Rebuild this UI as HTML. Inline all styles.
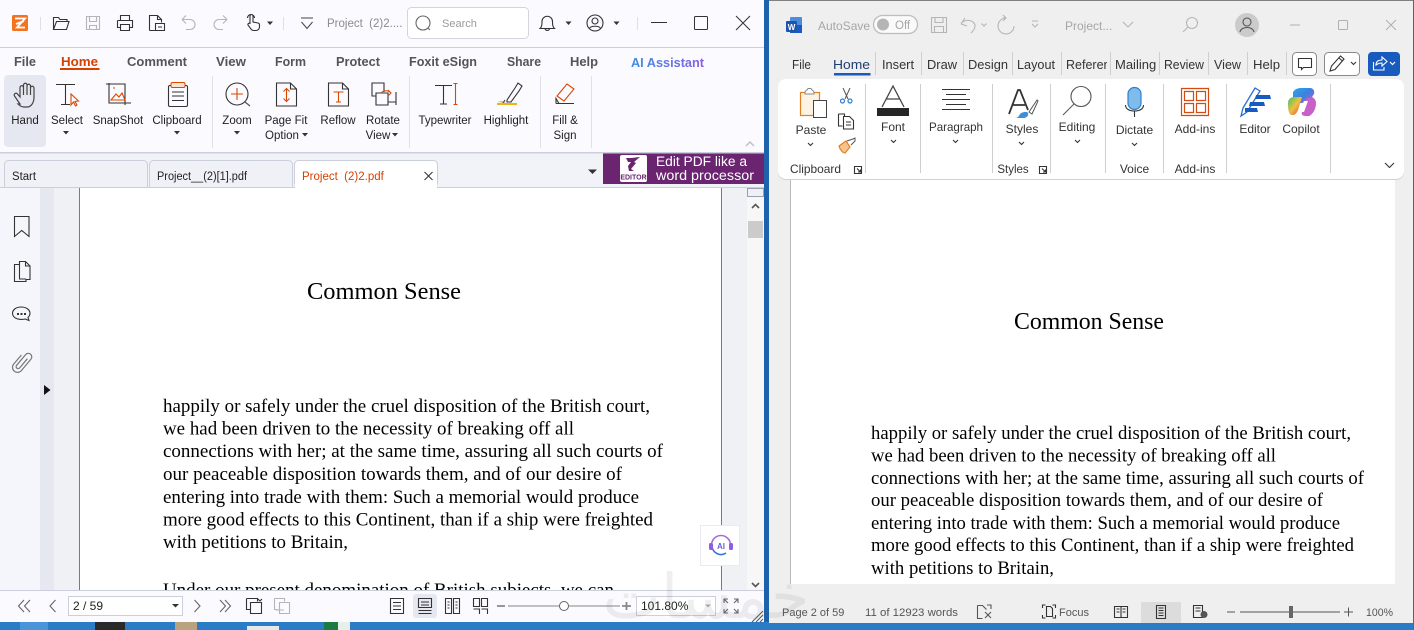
<!DOCTYPE html>
<html><head><meta charset="utf-8"><style>
html,body{margin:0;padding:0;background:#2a7cc7;width:1414px;height:630px;overflow:hidden}
svg{display:block;font-family:"Liberation Sans",sans-serif}
.m{font-size:13px;font-weight:bold;fill:#555}
.r{font-size:11.5px;fill:#222;text-anchor:middle}
.w{font-size:12.5px;fill:#333}
.wc{font-size:12px;fill:#333;text-anchor:middle}
.s{fill:none;stroke:#333;stroke-width:1.1}
.o{fill:none;stroke:#d84a00;stroke-width:1.1}
.g{fill:none;stroke:#b5b5b5;stroke-width:1.1}
.st{font-size:11px;fill:#555}
</style></head><body>
<svg width="1414" height="630" viewBox="0 0 1414 630" xmlns="http://www.w3.org/2000/svg">
<defs>
<linearGradient id="ai" x1="0" x2="1"><stop offset="0" stop-color="#3f8fe0"/><stop offset="1" stop-color="#8a5fe0"/></linearGradient>
<linearGradient id="cp" x1="0" y1="0" x2="1" y2="1"><stop offset="0" stop-color="#2aa6e8"/><stop offset=".5" stop-color="#3f7fe0"/><stop offset="1" stop-color="#c060d0"/></linearGradient>
<linearGradient id="cp2" x1="0" y1="0" x2="1" y2="1"><stop offset="0" stop-color="#40c070"/><stop offset=".5" stop-color="#f0c040"/><stop offset="1" stop-color="#e04040"/></linearGradient>
<clipPath id="pg"><rect x="80" y="188" width="641" height="402"/></clipPath>
<clipPath id="rf"><rect x="1066" y="50" width="41" height="26"/></clipPath>
<clipPath id="ml"><rect x="1115" y="50" width="41" height="26"/></clipPath>
</defs>

<!-- desktop -->
<rect width="1414" height="630" fill="#2a7cc7"/>
<rect x="764" y="0" width="5" height="622" fill="#1d62ab"/>
<rect x="20" y="622" width="28" height="8" fill="#4a95da"/>
<rect x="95" y="622" width="30" height="8" fill="#2a2a2a"/>
<rect x="175" y="622" width="22" height="8" fill="#b9a27f"/>
<rect x="247" y="626" width="32" height="4" fill="#e8e8e8"/>
<rect x="324" y="622" width="14" height="8" fill="#1d7a45"/>
<rect x="338" y="622" width="12" height="8" fill="#e6efe8"/>

<!-- ========== FOXIT ========== -->
<rect x="0" y="0" width="764" height="622" fill="#fafaff"/>
<rect x="0" y="47" width="764" height="1" fill="#cbcedb"/>
<rect x="0" y="152" width="764" height="1.5" fill="#cbcedb"/>

<!-- QAT -->
<rect x="12" y="15" width="16" height="16" rx="1.5" fill="#f4731f"/>
<path d="M15 18.5h10l-8 9h8M16 24l8-3" fill="none" stroke="#fff" stroke-width="1.8"/>
<path d="M40.5 17v13M283.5 17v13M637.5 17v13" stroke="#dfe0e6"/>
<path class="s" d="M53.5 29.5V17.5h5l1.5 2h7v2.5M53.5 29.5h13l2.5-8H56.500l-3 8z"/>
<path class="g" d="M86.500 16.500h13v13h-13zM89.500 16.500v5h7v-5M89.500 29.500v-4h7v4"/>
<path class="s" d="M120.500 20.500v-5h9v5M117.500 20.500h15v7h-3M120.500 27.500h-3v-7M120.500 24.500h9v6h-9z"/>
<path class="s" d="M149.500 30.500v-15h8l4 4v3M149.500 30.500h6M157.500 15.500v4h4M155.500 23.500h9v7h-9zM158 27h4"/>
<path class="g" d="M182 19.500l4-4M182 19.500l4 4M182 19.500h8a5 5 0 0 1 0 10h-4"/>
<path class="g" d="M227 19.500l-4-4M227 19.500l-4 4M227 19.500h-8a5 5 0 0 0 0 10h4"/>
<path class="s" d="M250 24v-8a1.500 1.500 0 0 1 3 0v6l5 1a2 2 0 0 1 1.500 2v2a3.500 3.500 0 0 1-3.500 3.500h-2.500a3 3 0 0 1-2.500-1.500l-3-4a1.300 1.300 0 0 1 2-1.500zM247.500 18a3.500 3.500 0 0 1 7 0"/>
<path d="M267 21.500h6l-3 3.500z" fill="#333"/>
<path d="M301 18h12M301.500 22l5.500 6.500 5.500-6.500" fill="none" stroke="#444"/>
<text x="327" y="27" font-size="11.500" fill="#8c8c8c" xml:space="preserve">Project  (2)2....</text>
<rect x="407.500" y="7.500" width="121" height="31" rx="4" fill="#fff" stroke="#d3d5de"/>
<circle cx="423" cy="23" r="7" fill="none" stroke="#666" stroke-width="1.100"/><path d="M428 28l2 2" stroke="#666"/>
<text x="442" y="27" font-size="11" fill="#9a9a9a">Search</text>
<path class="s" d="M540 28.500h14.500c-2-2-2-4-2-7a5 5 0 0 0-10.500 0c0 3 0 5-2 7zM545 29a2.500 2.500 0 0 0 4.500 0"/>
<path d="M565.500 21.500h6l-3 3.500z" fill="#333"/>
<circle class="s" cx="595" cy="23" r="8"/><circle class="s" cx="595" cy="21" r="3"/><path class="s" d="M589.500 28.500c1-3 10-3 11 0"/>
<path d="M613.500 21.500h6l-3 3.500z" fill="#333"/>
<path d="M651 22.500h16" stroke="#333" stroke-width="1"/>
<rect x="694.500" y="16.500" width="13" height="13" rx="1" fill="none" stroke="#333"/>
<path d="M736 16l14 14M750 16l-14 14" stroke="#333"/>

<!-- Menu -->
<text class="m" x="14" y="66" textLength="22" lengthAdjust="spacingAndGlyphs">File</text>
<text class="m" x="61" y="66" style="fill:#d84000" textLength="37" lengthAdjust="spacingAndGlyphs">Home</text>
<rect x="60" y="68" width="39.500" height="2" fill="#d84000"/>
<text class="m" x="127" y="66" textLength="60" lengthAdjust="spacingAndGlyphs">Comment</text>
<text class="m" x="216" y="66" textLength="30" lengthAdjust="spacingAndGlyphs">View</text>
<text class="m" x="275" y="66" textLength="31" lengthAdjust="spacingAndGlyphs">Form</text>
<text class="m" x="336" y="66" textLength="44" lengthAdjust="spacingAndGlyphs">Protect</text>
<text class="m" x="409" y="66" textLength="68" lengthAdjust="spacingAndGlyphs">Foxit eSign</text>
<text class="m" x="507" y="66" textLength="34" lengthAdjust="spacingAndGlyphs">Share</text>
<text class="m" x="570" y="66" textLength="28" lengthAdjust="spacingAndGlyphs">Help</text>
<text class="m" x="631" y="67" style="fill:url(#ai)" textLength="73" lengthAdjust="spacingAndGlyphs">AI Assistant</text>

<!-- Ribbon -->
<rect x="4" y="75" width="42" height="72" rx="4" fill="#e6e8f1"/>
<path d="M212.500 76v72M409.500 76v72M540.500 76v72M591.500 76v72" stroke="#dfe1ea"/>
<path fill="none" stroke="#444" stroke-width="1.200" d="M20 104l-5.500-8a1.800 1.800 0 0 1 3-2l2.500 3V87.500a1.700 1.700 0 0 1 3.500 0V85a1.700 1.700 0 0 1 3.500 0v1a1.700 1.700 0 0 1 3.500 0v2a1.700 1.700 0 0 1 3.500 0V97c0 6-3 10-7 10h-3c-2 0-4-1-6-3zM23.500 87.500V95M27 85v10M30.500 86v9"/>
<path class="s" d="M56 84.500h19M65.500 84.500v20M61 104.500h9"/>
<path d="M71 94v11l2.500-3 2 4 1.500-1-2-3.500 3.500-.5z" class="o"/>
<path class="s" d="M106 84h19v19M109 84v-1M109 84v19h22M125 103v2"/>
<path class="o" d="M111 100l5-6 3 3 3-4 3 7zM113 88h2"/>
<rect class="s" x="168.500" y="85.500" width="19" height="21" rx="1.500"/>
<rect x="171" y="82.500" width="14" height="5" rx="1.500" fill="#fbe3d6" stroke="#d84a00"/>
<path class="s" d="M172 92h12M172 96h12M172 100.500h12"/>
<circle class="s" cx="237" cy="94" r="11"/>
<path d="M245 102l5 4" stroke="#555" stroke-width="1.200"/>
<path class="o" d="M231 94h12M237 88v12"/>
<path class="s" d="M276.500 83h14l6 6v17h-20zM290.500 83v6h6"/>
<path class="o" d="M286.500 88.500v13M283.500 91.500l3-3 3 3M283.500 98.500l3 3 3-3"/>
<path class="s" d="M328.500 83h14l6 6v17h-20zM342.500 83v6h6"/>
<path class="o" d="M333.500 92h10M338.500 92v10M336 102h5"/>
<path class="s" d="M384 92v-9h-12v13h4M380 83h4M376 93h12v12h-12zM396 105v-3h-8M396 92v10"/>
<path class="o" d="M381 93c3-3 7-3 10 0M388 90l3 3-3 3"/>
<path class="s" d="M435 85.500h17M443.500 85.500v18.500M440 104h7"/>
<path class="o" d="M455.500 83.500v21M453.500 83.500h4M453.500 104.500h4"/>
<path class="s" d="M507 100l8-12 3-5 4 3-3 5-8 11h-4zM505 100l-2 3 3 .5"/>
<path d="M497 102l5-1 2 1.500z" fill="#e7a61d"/>
<rect x="497" y="103" width="20" height="2" fill="#efb40e"/>
<path class="o" d="M557 96l10-12 7 5-10 12z" fill="#fbe3d6"/>
<path class="s" d="M556 103.500h18M556 103.500v-5l3 5"/>

<g class="lab">
<text class="r" x="25" y="124">Hand</text>
<text class="r" x="67" y="124">Select</text>
<text class="r" x="118" y="124">SnapShot</text>
<text class="r" x="177" y="124">Clipboard</text>
<text class="r" x="237" y="124">Zoom</text>
<text class="r" x="286" y="124">Page Fit</text>
<text class="r" x="282" y="139">Option</text>
<text class="r" x="338" y="124">Reflow</text>
<text class="r" x="383" y="124">Rotate</text>
<text class="r" x="378" y="139">View</text>
<text class="r" x="445" y="124">Typewriter</text>
<text class="r" x="506" y="124">Highlight</text>
<text class="r" x="565" y="124">Fill &amp;</text>
<text class="r" x="565" y="139">Sign</text>
</g>
<path fill="#333" d="M63 131h6l-3 3.500zM174 131h6l-3 3.500zM234 131h6l-3 3.500zM302 133h6l-3 3.500zM392 133h6l-3 3.500z"/>
<path d="M746 146l4-4 4 4" fill="none" stroke="#c0c0c0" stroke-width="1.500"/>

<!-- Tabs -->
<rect x="0" y="153.500" width="764" height="34" fill="#f2f3f8"/>
<rect x="4.500" y="160.500" width="143" height="30" rx="4" fill="#f0f1f6" stroke="#cbcedb"/>
<rect x="149.500" y="160.500" width="143" height="30" rx="4" fill="#f0f1f6" stroke="#cbcedb"/>
<rect x="294.500" y="160.500" width="143" height="30" rx="4" fill="#fff" stroke="#cbcedb"/>
<text x="12" y="180" font-size="11.500" fill="#222" textLength="24" lengthAdjust="spacingAndGlyphs">Start</text>
<text x="157" y="180" font-size="11.500" fill="#222" textLength="90" lengthAdjust="spacingAndGlyphs">Project__(2)[1].pdf</text>
<text x="302" y="180" font-size="11.500" fill="#d84000" xml:space="preserve">Project  (2)2.pdf</text>
<path d="M424.500 172l8 8M432.500 172l-8 8" stroke="#333"/>
<path d="M588 169.500h9l-4.500 4.500z" fill="#333"/>
<rect x="603" y="153.500" width="161" height="30.500" fill="#6b2470"/>
<rect x="620" y="155" width="27" height="27" rx="2" fill="#fff"/>
<path d="M626 158h5l9-1-6 5 2 1-5 6 3 2h-5l-1-5 3-4-3 0z" fill="#6b2470"/>
<text x="633.500" y="179.500" font-size="7" font-weight="bold" fill="#6b2470" text-anchor="middle">EDITOR</text>
<text x="656" y="166" font-size="13.500" fill="#fff" textLength="91" lengthAdjust="spacingAndGlyphs">Edit PDF like a</text>
<text x="656" y="180" font-size="13.500" fill="#fff" textLength="98" lengthAdjust="spacingAndGlyphs">word processor</text>

<!-- Main -->
<rect x="0" y="187.500" width="764" height="403" fill="#f0f1f5"/>
<rect x="0" y="187.500" width="40" height="403" fill="#f5f6fb"/>
<rect x="40" y="187.500" width="14" height="403" fill="#e6e8f1"/>
<rect x="80" y="187.500" width="641" height="403" fill="#fff"/>
<rect x="294.500" y="184" width="143" height="4" fill="#fff"/>
<path d="M79.500 188v402M721.500 188v402" stroke="#7a7a7a"/>
<rect x="0" y="187" width="295" height="1" fill="#cbcedb"/><rect x="437" y="187" width="327" height="1" fill="#cbcedb"/>
<rect x="747" y="188" width="17" height="403" fill="#f7f7f7"/>
<rect x="747.500" y="188.500" width="16" height="8" fill="#eef0f6" stroke="#9aa0ac"/>
<path d="M752 208l3.500-3.500 3.500 3.500" fill="none" stroke="#555" stroke-width="1.600"/>
<rect x="748" y="221" width="15" height="17" fill="#cbcbcb"/>
<path d="M752 583l3.500 3.500 3.500-3.500" fill="none" stroke="#555" stroke-width="1.600"/>

<path class="s" d="M14.500 216.500h14.500v20l-7.250-6-7.250 6z"/>
<path class="s" d="M14.500 264.500h5v-3h6l4.500 4.500v13.500h-4v2h-11.500zM19.500 264.500v14.500h6.500M25.500 261.500v4.500h4.500"/>
<path class="s" d="M21 307c5 0 9 2.500 9 6.500 0 2-1 3-2 4l1 3-4-1.500c-4 1-12 .5-12.500-5.500 0-4 4-6.500 8.500-6.500z"/>
<path fill="#333" d="M17 313h2v2h-2zM20.500 313h2v2h-2zM24 313h2v2h-2z"/>
<path transform="rotate(40 22 362)" d="M24 356V368a2 2 0 0 1-4 0V354a3.500 3.500 0 0 1 7 0V369a5 5 0 0 1-10 0V357" fill="none" stroke="#777" stroke-width="1.200"/>
<path d="M44 385l6.500 5-6.500 5z" fill="#111"/>

<!-- PDF page -->
<text x="307" y="299" font-family="Liberation Serif" font-size="24" fill="#000" textLength="154" lengthAdjust="spacingAndGlyphs">Common Sense</text>
<g clip-path="url(#pg)" style="font-family:'Liberation Serif',serif;font-size:18.670px">
<text x="163" y="412" textLength="487" lengthAdjust="spacingAndGlyphs">happily or safely under the cruel disposition of the British court,</text>
<text x="163" y="434.500" textLength="411" lengthAdjust="spacingAndGlyphs">we had been driven to the necessity of breaking off all</text>
<text x="163" y="457" textLength="500" lengthAdjust="spacingAndGlyphs">connections with her; at the same time, assuring all such courts of</text>
<text x="163" y="480" textLength="459" lengthAdjust="spacingAndGlyphs">our peaceable disposition towards them, and of our desire of</text>
<text x="163" y="503" textLength="476" lengthAdjust="spacingAndGlyphs">entering into trade with them: Such a memorial would produce</text>
<text x="163" y="525.500" textLength="490" lengthAdjust="spacingAndGlyphs">more good effects to this Continent, than if a ship were freighted</text>
<text x="163" y="548" textLength="185" lengthAdjust="spacingAndGlyphs">with petitions to Britain,</text>
<text x="163" y="596" textLength="451" lengthAdjust="spacingAndGlyphs">Under our present denomination of British subjects, we can</text>
</g>

<!-- AI btn -->
<rect x="700.500" y="525.500" width="39" height="40" fill="#fff" stroke="#e8e9f2"/>
<path d="M711.500 545a9.500 9.500 0 0 1 19 0" fill="none" stroke="#a06ae0" stroke-width="1.500"/>
<path d="M712 546a9 9 0 0 0 14 7" fill="none" stroke="#2f6fd0" stroke-width="1.500"/>
<rect x="709" y="543" width="4" height="7" rx="1.500" fill="#8f5fe0"/><rect x="729" y="543" width="4" height="7" rx="1.500" fill="#8f5fe0"/>
<text x="721" y="549" font-size="8" fill="#6a5fe0" text-anchor="middle" font-weight="bold">AI</text>

<!-- Bottom bar -->
<rect x="0" y="590" width="764" height="32" fill="#fafaff"/>
<rect x="0" y="590" width="764" height="1" fill="#cbcedb"/>
<path fill="none" stroke="#666" stroke-width="1.100" d="M24 600l-5.500 6 5.500 6M30 600l-5.500 6 5.500 6M55.500 600l-5.500 6 5.500 6M194.500 600l5.500 6-5.500 6M220 600l5.500 6-5.500 6M225 600l5.500 6-5.500 6"/>
<rect x="68.500" y="596.500" width="114" height="19" fill="#fff" stroke="#cbcedb"/>
<text x="73" y="610" font-size="12" fill="#222">2 / 59</text>
<path d="M172 604h7l-3.500 3.500z" fill="#333"/>
<path class="s" d="M246.500 598.500h11v3M246.500 598.500v11h4M250.500 602.500h11v11h-11zM258 599l2 2 2-2"/>
<path class="g" d="M274.500 598.500h10v3M274.500 598.500v11h3M279.500 602.500h10v11h-10zM276 610h8"/>
<path class="s" d="M390.500 598.500h13v15h-13zM393 602.500h8M393 606h8M393 609.500h8"/>
<rect x="413" y="594" width="24" height="24" rx="3" fill="#e6e8f1"/>
<path class="s" d="M418.500 598.500h13v9h-13zM418.500 610.500h13M418.500 613.500h13M421 602h8M421 605h8"/>
<path class="s" d="M445.500 598.500h6v15h-6zM453.500 598.500h6v15h-6zM447.500 602h2M447.500 605h2M447.500 608h2M455.500 602h2M455.500 605h2M455.500 608h2"/>
<path class="s" d="M473.500 598.500h6v8h-6zM481.500 598.500h6v8h-6zM473.500 609h6v5M481.500 609h6v5"/>
<path d="M497 606h8M622 606h9M626.500 602v8" stroke="#888" stroke-width="1.800"/>
<path d="M508 606h112" stroke="#b8b8b8" stroke-width="1.800"/>
<circle cx="564" cy="606" r="4.500" fill="#fff" stroke="#666"/>
<rect x="636.500" y="596.500" width="79" height="19" fill="#fff" stroke="#cbcedb"/>
<text x="641" y="610" font-size="12" fill="#222">101.80%</text>
<path d="M705 604.500h6l-3 3z" fill="#b0b0b0"/>
<path fill="none" stroke="#666" stroke-width="1.100" d="M724 603v-4h4M738 603v-4h-4M724 609v4h4M738 609v4h-4M724 599l4 4M738 599l-4 4M724 613l4-4M738 613l-4-4"/>
<path d="M752 622l11-11M756 622l7-7M760 622l3-3" stroke="#555"/>

<!-- ========== WORD ========== -->
<rect x="769" y="0" width="644" height="623" fill="#efefef"/>
<rect x="769" y="0" width="644" height="1" fill="#808080"/>
<rect x="1413" y="0" width="1" height="630" fill="#2a6fb5"/>

<!-- Title -->
<rect x="790" y="17" width="12" height="16" rx="1" fill="#4a8de0"/>
<rect x="790" y="25" width="12" height="8" fill="#185abd"/>
<rect x="786" y="21" width="11" height="11" rx="1" fill="#1d54b0"/>
<text x="791.500" y="30" font-size="8" font-weight="bold" fill="#fff" text-anchor="middle">W</text>
<text x="818" y="30" font-size="12" fill="#a6a6a6">AutoSave</text>
<rect x="873.500" y="15.500" width="44" height="18" rx="9" fill="#fafafa" stroke="#bdbdbd" stroke-width="1.300"/>
<circle cx="883" cy="24.500" r="6" fill="#b5b5b5"/>
<text x="895" y="29" font-size="11.500" fill="#a6a6a6">Off</text>
<path class="g" d="M931.500 17.500h15v15h-15zM935 17.500v5h8v-5M934.500 32.500v-6h9v6"/>
<path class="g" d="M961 24l4-6M961 24l6 2M961 24c4-6 14-4 14 2 0 3-2 5-4 7M981.500 23.500l2.500 2.500 2.500-2.500"/>
<path class="g" d="M1006 18a8 8 0 1 0 8 8M1006 18h-3M1003 15l3 3-3 3"/>
<path class="g" d="M1032 21h6M1032 24l3 3 3-3"/>
<text x="1065" y="30" font-size="12" fill="#a6a6a6">Project...</text>
<path class="g" d="M1123 22l5 5 5-5"/>
<circle class="g" cx="1192" cy="23" r="5.500"/><path class="g" d="M1188 27l-5 5"/>
<circle cx="1247" cy="25" r="12" fill="#cbcbcb"/>
<circle fill="none" stroke="#555" stroke-width="1.100" cx="1247" cy="22" r="4"/><path style="fill:none;stroke:#555;stroke-width:1.100" d="M1240 32c1-6 13-6 14 0"/>
<path d="M1290 25h10M1386 20l10 10M1396 20l-10 10" stroke="#b0b0b0"/>
<rect x="1338.500" y="20.500" width="9" height="9" rx="1" fill="none" stroke="#b0b0b0"/>

<!-- Tabs -->
<path d="M875.500 52v23M921.500 52v23M963.500 52v23M1012.500 52v23M1061.500 52v23M1110.500 52v23M1159.500 52v23M1208.500 52v23M1247.500 52v23M1286.500 52v23" stroke="#cfcfcf"/>
<text class="w" x="792" y="69" textLength="19" lengthAdjust="spacingAndGlyphs">File</text>
<text class="w" x="833" y="69" style="fill:#1f3d6e" textLength="37" lengthAdjust="spacingAndGlyphs">Home</text>
<rect x="834" y="73" width="36.500" height="2.500" fill="#185abd"/>
<text class="w" x="882" y="69" textLength="32" lengthAdjust="spacingAndGlyphs">Insert</text>
<text class="w" x="927" y="69" textLength="30" lengthAdjust="spacingAndGlyphs">Draw</text>
<text class="w" x="968" y="69" textLength="40" lengthAdjust="spacingAndGlyphs">Design</text>
<text class="w" x="1017" y="69" textLength="38" lengthAdjust="spacingAndGlyphs">Layout</text>
<g clip-path="url(#rf)"><text class="w" x="1066" y="69">References</text></g>
<g clip-path="url(#ml)"><text class="w" x="1115" y="69" style="font-size:13px">Mailings</text></g>
<text class="w" x="1164" y="69" textLength="40" lengthAdjust="spacingAndGlyphs">Review</text>
<text class="w" x="1214" y="69" textLength="27" lengthAdjust="spacingAndGlyphs">View</text>
<text class="w" x="1253" y="69" textLength="27" lengthAdjust="spacingAndGlyphs">Help</text>
<rect x="1292.500" y="52.500" width="24" height="23" rx="4" fill="#fff" stroke="#8a8a8a"/>
<path class="s" d="M1298.500 58.500h13v9h-8l-2 2v-2h-3z"/>
<rect x="1324.500" y="52.500" width="35" height="23" rx="4" fill="#fff" stroke="#8a8a8a"/>
<path class="s" d="M1330 71l1.500-5 9-10 3.500 3-9 10.500zM1339 58l3.500 3"/>
<path class="s" d="M1351 62l2.500 2.500 2.500-2.500"/>
<rect x="1368" y="52" width="32" height="24" rx="4" fill="#185abd"/>
<path d="M1373.500 62v8h10.500v-3M1376 65c0-4 3-5 6-5v-3l5 4.500-5 4.500v-3c-2 0-4 .5-6 2z" fill="none" stroke="#fff" stroke-width="1.100"/>
<path d="M1390 62l2.500 2.500 2.500-2.500" fill="none" stroke="#fff" stroke-width="1.200"/>

<!-- Doc bg -->
<rect x="791" y="180" width="604" height="404" fill="#fff"/>
<path d="M790.500 180v404" stroke="#b8b8b8"/>

<!-- Ribbon -->
<rect x="778" y="80" width="626" height="100" rx="8" fill="#000" opacity=".13"/>
<rect x="778" y="79" width="626" height="100" rx="8" fill="#fff"/>
<path d="M865.500 84v89M920.500 84v89M992.500 84v89M1050.500 84v89M1105.500 84v89M1163.500 84v89M1226.500 84v89M1330.500 84v89" stroke="#cfcfcf"/>
<!-- paste -->
<rect x="800.500" y="92.500" width="19" height="23" fill="#fdf3e3" stroke="#e57f22" stroke-width="1.200"/>
<path d="M805 92c1-2 2-1.500 3-3.500h3c1 2 2 1.500 3 3.500v2h-9z" fill="#fff" stroke="#888"/>
<rect x="813.500" y="100.500" width="13" height="17" fill="#fff" stroke="#444"/>
<path d="M843 88l5 11M850 88l-5 11" stroke="#555" fill="none"/>
<circle cx="842.500" cy="101" r="2" fill="none" stroke="#2f7fd0" stroke-width="1.200"/><circle cx="850" cy="101" r="2" fill="none" stroke="#2f7fd0" stroke-width="1.200"/>
<path class="s" d="M838.500 114h6v2M838.500 114v12h4M843.500 116.500h6l4 4v8.500h-10zM846 122h5M846 125h5"/>
<path d="M839 146l7-5 4 6-5 6c-2 0-5-3-6-7z" fill="#f7c48c" stroke="#e57f22" stroke-width="1.200"/>
<path d="M847 141l6-2 2-1v3l-4 4" fill="none" stroke="#555"/>
<text class="wc" x="811" y="134">Paste</text>
<text x="790" y="173" class="wc" style="text-anchor:start" textLength="51" lengthAdjust="spacingAndGlyphs">Clipboard</text>
<path class="s" d="M854.500 166.500h7v7h-7zM857 168.500l3.500 3.500M860.500 169.500v2.500h-2.500"/>
<path class="s" d="M808 143l2.500 2.500 2.500-2.500M891 140l2.500 2.500 2.500-2.500M953 140l2.500 2.500 2.500-2.500M1019 142l2.500 2.500 2.500-2.500M1075 140l2.500 2.500 2.500-2.500M1132 143l2.500 2.500 2.500-2.500"/>
<!-- font -->
<path fill="none" stroke="#444" stroke-width="1.300" d="M882 107l11-21 11 21M886 99h14"/>
<rect x="877" y="108" width="32" height="8" fill="#262626"/>
<text class="wc" x="893" y="131">Font</text>
<!-- para -->
<path class="s" d="M942 89.500h28M946 94.500h20M942 99.500h28M946 104.500h20M942 109.500h28"/>
<text class="wc" x="956" y="131" textLength="54" lengthAdjust="spacingAndGlyphs">Paragraph</text>
<!-- styles -->
<path d="M1009 114l9-24h2l8 20M1013 105h12" fill="none" stroke="#333" stroke-width="1.800"/>
<path d="M1029 112l8-12 1 1-6 13z" fill="#fff" stroke="#555"/>
<path d="M1015 118c3 0 4-2 5-4 2-2 7-3 8-1 1 3-2 5-4 5z" fill="#3f8ed8"/>
<text class="wc" x="1022" y="133">Styles</text>
<text class="wc" x="1013" y="173" style="font-size:11.500px">Styles</text>
<path class="s" d="M1039.500 166.500h7v7h-7zM1042 168.500l3.500 3.500M1045.500 169.500v2.500h-2.500"/>
<!-- editing -->
<circle fill="none" stroke="#555" stroke-width="1.100" cx="1081" cy="96.500" r="10"/><path d="M1074 104l-11 11" stroke="#555"/>
<text class="wc" x="1077" y="131">Editing</text>
<!-- dictate -->
<rect x="1128" y="87.500" width="13" height="22" rx="6.500" fill="#7fbcec" stroke="#2f7fd0" stroke-width="1.200"/>
<path class="s" d="M1125.500 105c0 4 4 6 9 6s9-2 9-6M1134.500 111v6"/>
<text class="wc" x="1134.500" y="134">Dictate</text>
<text class="wc" x="1134.500" y="173">Voice</text>
<!-- addins -->
<path fill="none" stroke="#d24b12" stroke-width="1.200" d="M1181.500 88.500h27v27h-27zM1184.500 91.500h9v9h-9zM1196.500 91.500h9v9h-9zM1184.500 103.500h9v9h-9zM1196.500 103.500h9v9h-9z"/>
<text class="wc" x="1195" y="133">Add-ins</text>
<text class="wc" x="1195" y="173">Add-ins</text>
<!-- editor -->
<path d="M1241 116l2-8 12-20 5 3-13 21z" fill="#fff" stroke="#2a6fd0" stroke-width="1.300"/>
<path d="M1256 95h14l1 4h-16zM1250 102h14l1 4h-16zM1245 108h12l1 4h-13z" fill="#185abd"/>
<text class="wc" x="1255" y="133">Editor</text>
<!-- copilot -->
<path d="M1293 92c2-3 5-4 8-4h9c3 0 5 3 4 6l-4 6-8 3-9 1z" fill="url(#cp)"/>
<path d="M1288 103c0-4 3-6 6-6h8l-3 10c-1 4-3 8-6 8h-1c-3 0-4-4-4-12z" fill="url(#cp2)"/>
<path d="M1316 103c0-3-2-5-4-6l-6 2-4 13c-1 3 1 4 4 4h3c3-1 7-6 7-13z" fill="#c860c8"/>
<path d="M1304 101h4l-4 11h-4z" fill="#fff"/>
<text class="wc" x="1301" y="133">Copilot</text>
<path class="s" d="M1385 163l4.500 4.500 4.500-4.500"/>

<!-- Word doc -->
<text x="1014" y="329" font-family="Liberation Serif" font-size="24" fill="#000" textLength="150" lengthAdjust="spacingAndGlyphs">Common Sense</text>
<g style="font-family:'Liberation Serif',serif;font-size:18.670px">
<text x="871" y="439" textLength="480" lengthAdjust="spacingAndGlyphs">happily or safely under the cruel disposition of the British court,</text>
<text x="871" y="461.500" textLength="405" lengthAdjust="spacingAndGlyphs">we had been driven to the necessity of breaking off all</text>
<text x="871" y="484" textLength="493" lengthAdjust="spacingAndGlyphs">connections with her; at the same time, assuring all such courts of</text>
<text x="871" y="506" textLength="452" lengthAdjust="spacingAndGlyphs">our peaceable disposition towards them, and of our desire of</text>
<text x="871" y="529" textLength="469" lengthAdjust="spacingAndGlyphs">entering into trade with them: Such a memorial would produce</text>
<text x="871" y="551" textLength="483" lengthAdjust="spacingAndGlyphs">more good effects to this Continent, than if a ship were freighted</text>
<text x="871" y="574" textLength="183" lengthAdjust="spacingAndGlyphs">with petitions to Britain,</text>
</g>

<!-- Word status -->
<text class="st" x="782" y="616">Page 2 of 59</text>
<text class="st" x="865" y="616" textLength="93" lengthAdjust="spacingAndGlyphs">11 of 12923 words</text>
<path fill="none" stroke="#555" stroke-width="1.100" d="M977.500 605.500h5l4 4M991 609v-4h-4M977.500 605.500v13h5M985 612l6 6M991 612l-6 6"/>
<path class="s" d="M1042.500 608v-3h3M1055.500 608v-3h-3M1042.500 615v3h3M1055.500 615v3h-3M1046.500 606.500h4l2 2v8h-6z"/>
<text class="st" x="1059" y="616" textLength="30" lengthAdjust="spacingAndGlyphs">Focus</text>
<path class="s" d="M1114.500 606.500h6.500v11h-6.500zM1121 606.500h6.500v11H1121zM1116.500 609h3M1116.500 612h3M1122.500 609h3M1122.500 612h3"/>
<rect x="1141" y="602" width="40" height="21" fill="#dcdcdc"/>
<path class="s" d="M1156.500 605.500h9v13h-9zM1158.500 608h5M1158.500 610.500h5M1158.500 613h5M1158.500 615.500h5"/>
<path class="s" d="M1193.500 605.500h9v12h-9zM1195.500 608h5M1195.500 611h5"/>
<circle cx="1204" cy="614.500" r="3.500" fill="#555"/>
<path d="M1227 612h8M1240 612h100M1344 612h9M1348.500 607.500v9" stroke="#555"/>
<rect x="1289" y="606" width="4" height="12" fill="#666"/>
<text class="st" x="1366" y="616" textLength="27" lengthAdjust="spacingAndGlyphs">100%</text>

<!-- watermark -->
<text x="706" y="618" font-family="DejaVu Sans" font-size="62" fill="#555" opacity=".09" text-anchor="middle">خمسات</text>
</svg>
</body></html>
